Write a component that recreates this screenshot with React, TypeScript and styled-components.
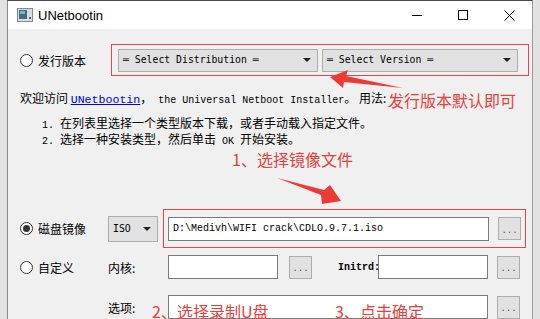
import styled, { createGlobalStyle } from "styled-components";

const Global = createGlobalStyle`
  html, body {
    margin: 0;
    padding: 0;
    background: #e6e6e6;
  }
`;

const Page = styled.div`
  position: relative;
  display: flex;
  width: 540px;
  height: 319px;
  overflow: hidden;
  font-family: "Noto Sans CJK SC", "Liberation Sans", sans-serif;
  color: #000;
`;

const Edge = styled.div<{ $w: number }>`
  width: ${(p) => p.$w}px;
  flex-shrink: 0;
  background: #e2e2e2;
`;

const Window = styled.div`
  width: 524px;
  flex-shrink: 0;
  display: flex;
  flex-direction: column;
  border-left: 1px solid #8a8a8a;
  border-top: 1px solid #4a4a4a;
  border-right: 1px solid #9a9a9a;
`;

const TitleBar = styled.div`
  height: 30px;
  background: #fff;
  display: flex;
  align-items: center;
  padding-left: 9px;
`;

const Title = styled.span`
  margin-left: 5px;
  font-family: "Liberation Sans", sans-serif;
  font-size: 13px;
`;

const Controls = styled.div`
  margin-left: auto;
  display: flex;
  height: 100%;
`;

const CtrlBtn = styled.div`
  width: 46px;
  height: 100%;
  display: flex;
  align-items: center;
  justify-content: center;
`;

const Body = styled.div`
  flex: 1;
  background: #f0f0f0;
  padding: 15px 3px 0 12px;
  display: flex;
  flex-direction: column;
`;

const Row = styled.div<{ $h: number; $mt?: number }>`
  display: flex;
  align-items: center;
  height: ${(p) => p.$h}px;
  margin-top: ${(p) => p.$mt ?? 0}px;
  flex-shrink: 0;
`;

const RadioLabel = styled.label<{ $w: number }>`
  width: ${(p) => p.$w}px;
  flex-shrink: 0;
  display: flex;
  align-items: center;
  gap: 5px;
  font-size: 12px;
`;

const Radio = styled.span<{ $on?: boolean }>`
  width: 13px;
  height: 13px;
  box-sizing: border-box;
  border-radius: 50%;
  border: 1px solid #333;
  background: #fff;
  display: flex;
  align-items: center;
  justify-content: center;
  &::after {
    content: "";
    display: ${(p) => (p.$on ? "block" : "none")};
    width: 7px;
    height: 7px;
    border-radius: 50%;
    background: #333;
  }
`;

const Frame = styled.div<{ $pad: string; $gap: number; $mr?: number; $ml?: number }>`
  flex: 1;
  align-self: stretch;
  display: flex;
  align-items: center;
  gap: ${(p) => p.$gap}px;
  padding: ${(p) => p.$pad};
  margin-right: ${(p) => p.$mr ?? 0}px;
  margin-left: ${(p) => p.$ml ?? 0}px;
  border: 1px solid #e0474a;
`;

const Combo = styled.div<{ $w: number; $h: number }>`
  width: ${(p) => p.$w}px;
  height: ${(p) => p.$h}px;
  flex-shrink: 0;
  box-sizing: border-box;
  background: #e1e1e1;
  border: 1px solid #adadad;
  display: flex;
  align-items: center;
  padding: 0 6px 0 4px;
  &::after {
    content: "";
    margin-left: auto;
    border-left: 4px solid transparent;
    border-right: 4px solid transparent;
    border-top: 4px solid #222;
  }
`;

const ComboText = styled.span`
  font-family: "DejaVu Sans Mono", monospace;
  font-size: 9.8px;
  line-height: 12px;
  white-space: pre;
`;

const Field = styled.div<{ $w?: number }>`
  ${(p) => (p.$w ? `width: ${p.$w}px;` : "flex: 1;")}
  height: 24px;
  flex-shrink: 0;
  box-sizing: border-box;
  background: #fff;
  border: 1px solid #7a7a7a;
  display: flex;
  align-items: center;
  padding-left: 4px;
  font-family: "Liberation Mono", monospace;
  font-size: 10px;
  white-space: pre;
`;

const DotsBtn = styled.div<{ $ml?: number }>`
  width: 23px;
  height: 23px;
  flex-shrink: 0;
  margin-left: ${(p) => p.$ml ?? 0}px;
  box-sizing: border-box;
  background: #e1e1e1;
  border: 1px solid #adadad;
  display: flex;
  align-items: center;
  justify-content: center;
  padding-top: 4px;
  font-family: "Liberation Mono", monospace;
  font-size: 9px;
  color: #555;
`;

const FieldLabel = styled.span<{ $w: number; $mono?: boolean; $ml?: number }>`
  width: ${(p) => p.$w}px;
  flex-shrink: 0;
  margin-left: ${(p) => p.$ml ?? 0}px;
  font-size: ${(p) => (p.$mono ? 10 : 12)}px;
  font-family: ${(p) =>
    p.$mono ? '"Liberation Mono", monospace' : '"Noto Sans CJK SC", sans-serif'};
  font-weight: ${(p) => (p.$mono ? 700 : 400)};
`;

const Welcome = styled.div`
  margin-top: 15px;
  height: 14px;
  line-height: 14px;
  font-size: 12px;
  white-space: pre;
`;

const Mono = styled.span<{ $size?: number }>`
  font-family: "Liberation Mono", monospace;
  font-size: ${(p) => p.$size ?? 10}px;
`;

const Link = styled.a`
  font-family: "Liberation Mono", monospace;
  font-size: 11.6px;
  color: #0000ee;
  text-decoration: underline;
`;

const Steps = styled.ol`
  margin: 11px 0 0;
  padding-left: 22px;
  list-style: none;
  font-size: 12px;
  line-height: 13px;
  white-space: pre;
`;

const Note = styled.div<{ $x: number; $y: number }>`
  position: absolute;
  left: ${(p) => p.$x}px;
  top: ${(p) => p.$y}px;
  font-size: 16px;
  line-height: 18px;
  color: #e8403c;
  white-space: pre;
`;

const Arrow = styled.svg`
  position: absolute;
  left: 0;
  top: 0;
  pointer-events: none;
`;

function AppIcon() {
  return (
    <svg width="16" height="14" viewBox="0 0 16 14">
      <rect x="0.5" y="0.5" width="15" height="13" fill="#d9dde0" stroke="#7a8a96" />
      <rect x="2" y="2" width="8" height="9" fill="#3f6f7c" />
      <rect x="3" y="3" width="5" height="3" fill="#7fb3bd" />
      <rect x="12" y="9" width="2" height="2" fill="#555" />
    </svg>
  );
}

export default function App() {
  return (
    <Page>
      <Global />
      <Edge $w={7} />
      <Window>
        <TitleBar>
          <AppIcon />
          <Title>UNetbootin</Title>
          <Controls>
            <CtrlBtn>
              <svg width="10" height="10" viewBox="0 0 10 10">
                <line x1="0" y1="5.5" x2="10" y2="5.5" stroke="#000" />
              </svg>
            </CtrlBtn>
            <CtrlBtn>
              <svg width="10" height="10" viewBox="0 0 10 10">
                <rect x="0.5" y="0.5" width="9" height="9" fill="none" stroke="#000" />
              </svg>
            </CtrlBtn>
            <CtrlBtn>
              <svg width="11" height="11" viewBox="0 0 11 11">
                <path d="M0.5 0.5 L10.5 10.5 M10.5 0.5 L0.5 10.5" stroke="#000" />
              </svg>
            </CtrlBtn>
          </Controls>
        </TitleBar>
        <Body>
          <Row $h={32}>
            <RadioLabel $w={91}>
              <Radio />
              发行版本
            </RadioLabel>
            <Frame $pad="0 9px 0 6px" $gap={4}>
              <Combo $w={200} $h={23}>
                <ComboText>═ Select Distribution ═</ComboText>
              </Combo>
              <Combo $w={196} $h={23}>
                <ComboText>═ Select Version ═</ComboText>
              </Combo>
            </Frame>
          </Row>
          <Welcome>
            欢迎访问 <Link>UNetbootin</Link>，<Mono> the Universal Netboot Installer</Mono>。 用法:
          </Welcome>
          <Steps>
            <li>
              <Mono>1. </Mono>在列表里选择一个类型版本下载，或者手动载入指定文件。
            </li>
            <li>
              <Mono>2. </Mono>选择一种安装类型，然后单击<Mono> OK </Mono>开始安装。
            </li>
          </Steps>
          <Row $h={39} $mt={61}>
            <RadioLabel $w={88}>
              <Radio $on />
              磁盘镜像
            </RadioLabel>
            <Combo $w={50} $h={26}>
              <ComboText>ISO</ComboText>
            </Combo>
            <Frame $pad="0 4px" $gap={0} $mr={3} $ml={5}>
              <Field>D:\Medivh\WIFI crack\CDLO.9.7.1.iso</Field>
              <DotsBtn $ml={9}>...</DotsBtn>
            </Frame>
          </Row>
          <Row $h={24} $mt={7}>
            <RadioLabel $w={88}>
              <Radio />
              自定义
            </RadioLabel>
            <FieldLabel $w={60}>内核:</FieldLabel>
            <Field $w={110} />
            <DotsBtn $ml={11}>...</DotsBtn>
            <FieldLabel $w={40} $mono $ml={26}>
              Initrd:
            </FieldLabel>
            <Field $w={110} />
            <DotsBtn $ml={9}>...</DotsBtn>
          </Row>
          <Row $h={24} $mt={16}>
            <RadioLabel $w={88} />
            <FieldLabel $w={60}>选项:</FieldLabel>
            <Field $w={320} />
            <DotsBtn $ml={9}>...</DotsBtn>
          </Row>
        </Body>
      </Window>
      <Edge $w={8} />

      <Arrow width="540" height="319" viewBox="0 0 540 319">
        <polygon
          points="330,77 348,70 346,76 403,88 344,82 343,88"
          fill="#ee3a34"
        />
        <polygon
          points="277,178 324,190 330,185 341,201 322,204 321,195"
          fill="#ee3a34"
        />
      </Arrow>
      <Note $x={388} $y={91}>发行版本默认即可</Note>
      <Note $x={232} $y={150}>1、选择镜像文件</Note>
      <Note $x={152} $y={302}>2、选择录制U盘</Note>
      <Note $x={335} $y={302}>3、点击确定</Note>
    </Page>
  );
}
